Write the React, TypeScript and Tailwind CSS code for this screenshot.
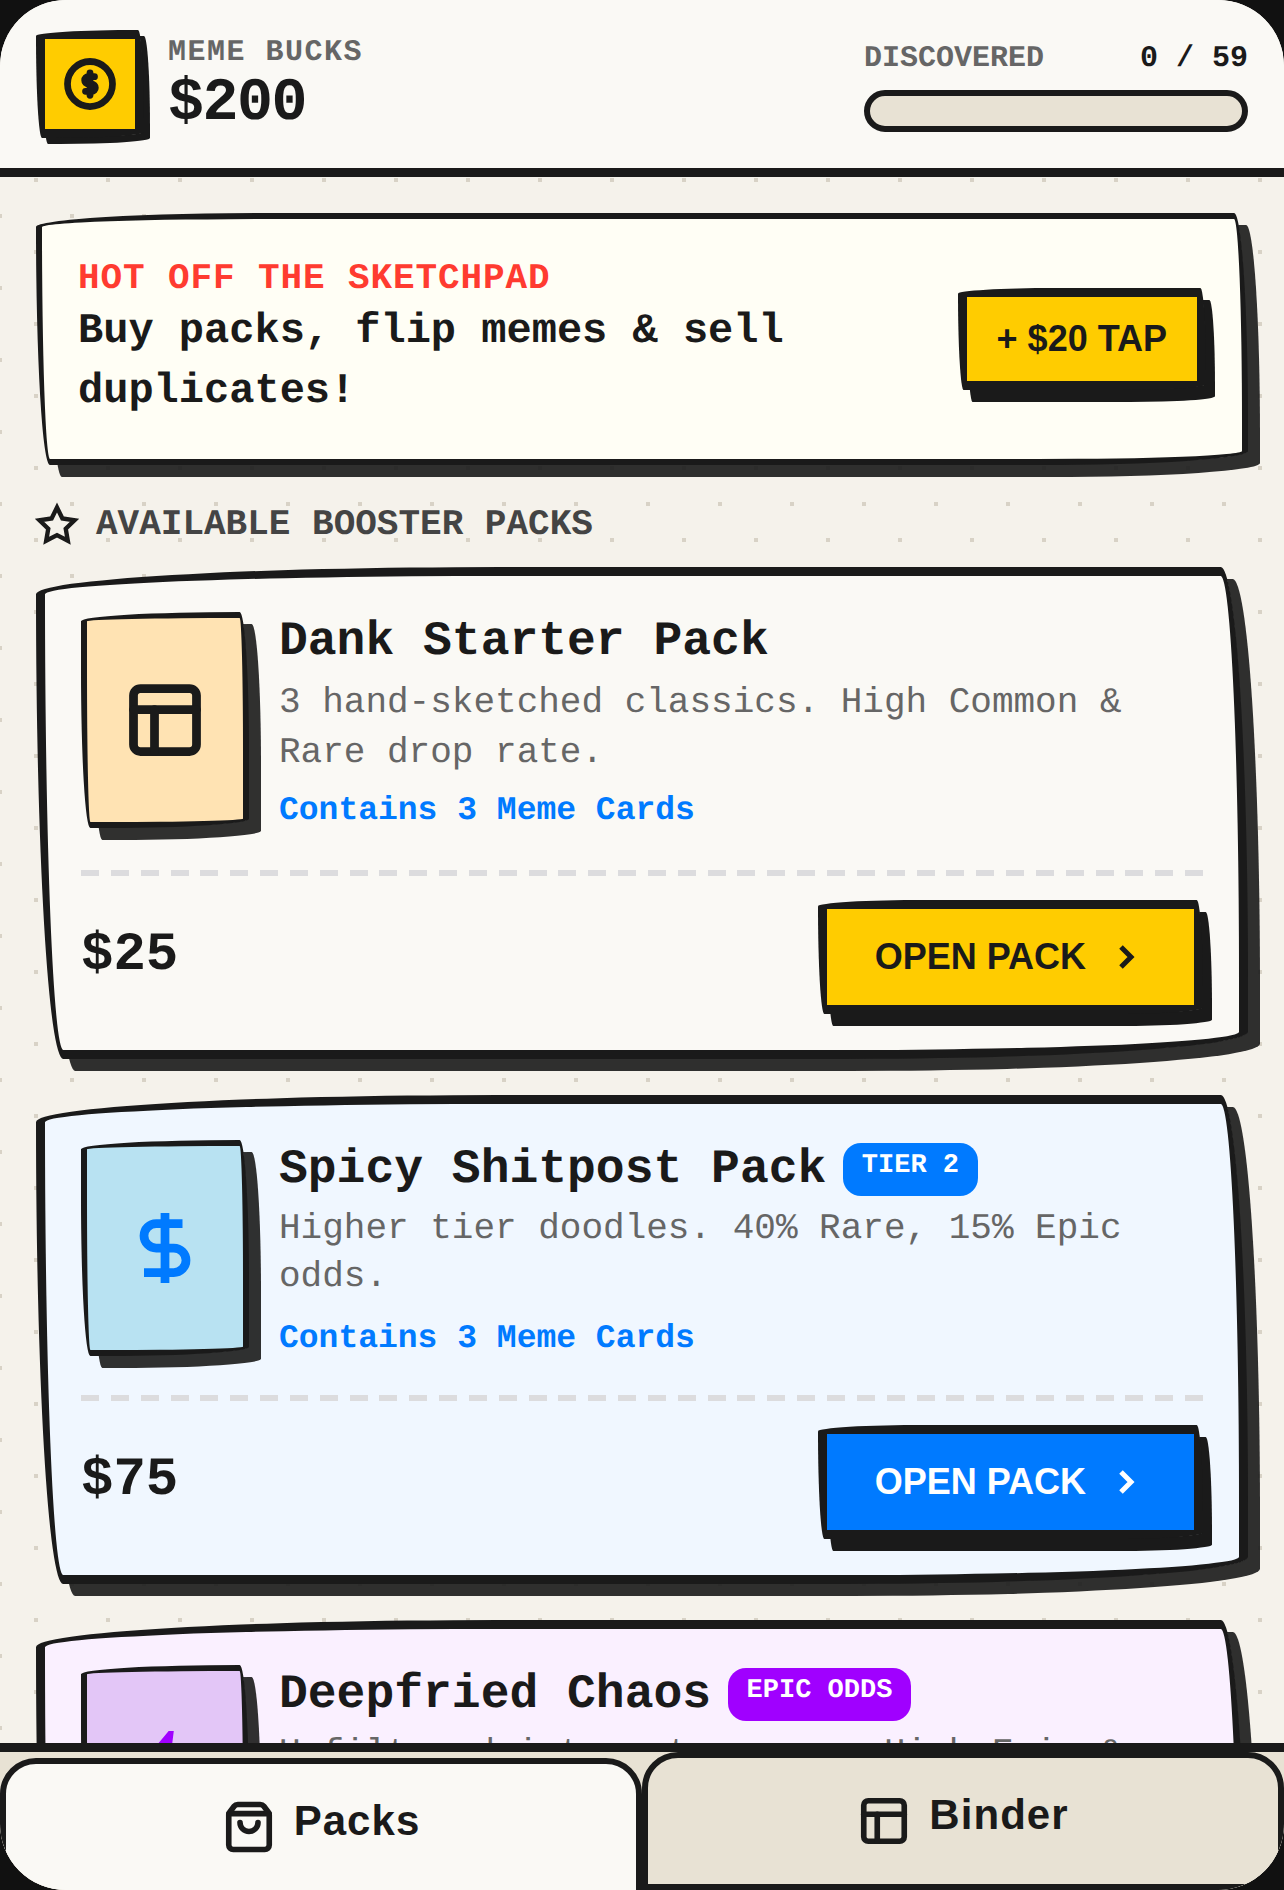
import { ChevronRight, DollarSign, PanelsTopLeft, ShoppingBag } from 'lucide-react';
import type { ReactNode } from 'react';

interface Pack {
  name: string;
  badge?: string;
  badgeClass?: string;
  desc: string;
  descClass: string;
  containsClass: string;
  price: string;
  cardClass: string;
  artClass: string;
  rowClass: string;
  buttonClass: string;
  icon: ReactNode;
}

// sharp-cornered bolt, the icon package's one has rounded ends
const BoltIcon = () => (
  <svg width="84" height="84" viewBox="0 0 24 24" fill="#a000ff" stroke="#a000ff" strokeWidth="2.5" strokeLinejoin="miter">
    <polygon points="13 2 3 14 12 14 11 22 21 10 12 10 13 2" />
  </svg>
);

const StarIcon = () => (
  <svg width="42" height="42" viewBox="0 0 24 24" fill="none" stroke="#1a1a1a" strokeWidth="2.5" strokeLinejoin="miter" className="shrink-0 overflow-visible">
    <polygon points="12 2 15.09 8.26 22 9.27 17 14.14 18.18 21.02 12 17.77 5.82 21.02 7 14.14 2 9.27 8.91 8.26 12 2" />
  </svg>
);

const CoinIcon = () => (
  <svg width="54" height="54" viewBox="0 0 24 24" fill="none" stroke="#1a1a1a" strokeWidth="3" strokeLinecap="round">
    <circle cx="12" cy="12" r="10" />
    <path d="M14 8.75h-2.75a1.6 1.6 0 0 0 0 3.25h1.5a1.6 1.6 0 0 1 0 3.25H10" />
    <path d="M12 7v10" />
  </svg>
);

const packs: Pack[] = [
  {
    name: 'Dank Starter Pack',
    desc: '3 hand-sketched classics. High Common & Rare drop rate.',
    descClass: 'mt-[5px] leading-[49.5px]',
    containsClass: 'mt-[10px]',
    price: '$25',
    cardClass: 'bg-[#faf9f5]',
    artClass: 'bg-[#ffe3b3]',
    rowClass: 'pb-[35px]',
    buttonClass: 'bg-[#ffcc00] text-[#1a1a1a]',
    icon: <PanelsTopLeft size={84} strokeWidth={2.5} className="text-[#1a1a1a]" />,
  },
  {
    name: 'Spicy Shitpost Pack',
    badge: 'TIER 2',
    badgeClass: 'bg-[#007aff]',
    desc: 'Higher tier doodles. 40% Rare, 15% Epic odds.',
    descClass: 'mt-[4px] leading-[48px]',
    containsClass: 'mt-[14px]',
    price: '$75',
    cardClass: 'bg-[#f0f7ff]',
    artClass: 'bg-[#b8e2f2]',
    rowClass: 'pb-[32px]',
    buttonClass: 'bg-[#007aff] text-white',
    icon: <DollarSign size={84} strokeWidth={2.5} strokeLinecap="butt" strokeLinejoin="miter" className="text-[#007aff]" />,
  },
  {
    name: 'Deepfried Chaos',
    badge: 'EPIC ODDS',
    badgeClass: 'bg-[#a000ff]',
    desc: 'Unfiltered internet sewage. High Epic & Legendary odds.',
    descClass: 'mt-[4px] leading-[48px]',
    containsClass: 'mt-[14px]',
    price: '$150',
    cardClass: 'bg-[#faf0ff]',
    artClass: 'bg-[#e3c6f7]',
    rowClass: 'pb-[32px]',
    buttonClass: 'bg-[#a000ff] text-white',
    icon: <BoltIcon />,
  },
];

const PackCard = ({ pack }: { pack: Pack }) => (
  <div
    className={`shrink-0 border-[9px] border-[#1a1a1a] rounded-[918px_54px_810px_54px/54px_810px_54px_918px] shadow-[12px_12px_0_rgba(26,26,26,0.9)] p-[36px] ${pack.cardClass}`}
  >
    <div className={`flex items-start gap-[30px] ${pack.rowClass}`}>
      <div
        className={`shrink-0 w-[168px] h-[216px] flex items-center justify-center border-[6px] border-[#1a1a1a] rounded-[918px_54px_810px_54px/54px_810px_54px_918px] shadow-[12px_12px_0_rgba(26,26,26,0.9)] ${pack.artClass}`}
      >
        {pack.icon}
      </div>
      <div className="flex-1 min-w-0">
        <div className="flex items-start gap-[17px]">
          <h3 className="text-[48px] leading-[61px] font-bold text-[#1a1a1a] whitespace-nowrap">{pack.name}</h3>
          {pack.badge && (
            <span
              className={`mt-[3px] h-[53px] px-[18.5px] pt-[5px] rounded-[18px] text-[27px] leading-[36px] font-bold text-white whitespace-nowrap ${pack.badgeClass}`}
            >
              {pack.badge}
            </span>
          )}
        </div>
        <p className={`text-[36px] text-[#666666] ${pack.descClass}`}>{pack.desc}</p>
        <p className={`text-[33px] leading-[48px] font-bold text-[#007aff] ${pack.containsClass}`}>Contains 3 Meme Cards</p>
      </div>
    </div>
    <div className="h-[6px] bg-[repeating-linear-gradient(90deg,#dcdcde_0,#dcdcde_18px,transparent_18px,transparent_29.84px)]" />
    <div className="mt-[24px] flex items-center justify-between">
      <span className="mb-[3px] text-[54px] leading-[84px] font-bold text-[#1a1a1a]">{pack.price}</span>
      <button
        className={`h-[114px] px-[48px] flex items-center gap-[20px] border-[9px] border-[#1a1a1a] rounded-[918px_54px_810px_54px/54px_810px_54px_918px] shadow-[9px_12px_0_#1a1a1a] font-['Liberation_Sans',sans-serif] font-bold text-[36px] ${pack.buttonClass}`}
      >
        OPEN PACK
        <ChevronRight size={40} strokeWidth={3} strokeLinecap="butt" strokeLinejoin="miter" />
      </button>
    </div>
  </div>
);

export default function App() {
  return (
    <div className="w-[1284px] h-[1890px] bg-[#111111] overflow-hidden font-['Liberation_Mono',monospace] [text-rendering:geometricPrecision]">
      <div className="h-full rounded-[66px] bg-[#222222] overflow-hidden">
        <div className="h-full flex flex-col rounded-[63px] overflow-hidden bg-[#f5f2eb]">
          {/* Header */}
          <header className="shrink-0 h-[177px] border-b-[9px] border-[#1a1a1a] bg-[#faf9f5] px-[36px] flex items-center justify-between">
            <div className="flex items-center gap-[24px]">
              <div className="w-[108px] h-[108px] flex items-center justify-center bg-[#ffcc00] border-[9px] border-[#1a1a1a] rounded-[918px_54px_810px_54px/54px_810px_54px_918px] shadow-[6px_6px_0_#1a1a1a]">
                <CoinIcon />
              </div>
              <div className="pb-[2px]">
                <div className="text-[30px] leading-[42px] font-bold tracking-[1.5px] text-[#666666]">MEME BUCKS</div>
                <div className="text-[60px] leading-[61px] font-bold tracking-[-1.5px] text-[#1a1a1a]">$200</div>
              </div>
            </div>
            <div className="w-[384px]">
              <div className="flex items-center justify-between text-[30px] leading-[47px] font-bold">
                <span className="text-[#666666]">DISCOVERED</span>
                <span className="text-[#1a1a1a]">0 / 59</span>
              </div>
              <div className="mt-[7px] h-[42px] rounded-full border-[6px] border-[#1a1a1a] bg-[#e8e2d4]" />
            </div>
          </header>

          <main className="flex-1 min-h-0 overflow-hidden p-[36px] flex flex-col bg-[image:conic-gradient(at_4px_4px,transparent_75%,#d8d2c6_0),conic-gradient(at_4px_4px,transparent_75%,#d8d2c6_0)] bg-[size:72px_72px] bg-[position:34px_1px,70px_37px]">
            <div className="shrink-0 h-[252px] flex items-center gap-[30px] bg-[#fffef5] border-[6px] border-[#1a1a1a] rounded-[918px_54px_810px_54px/54px_810px_54px_918px] shadow-[12px_12px_0_rgba(26,26,26,0.9)] px-[36px]">
              <div className="flex-1 min-w-0">
                <div className="text-[36px] leading-[48px] font-bold tracking-[0.9px] text-[#ff3b30]">HOT OFF THE SKETCHPAD</div>
                <p className="-mt-[2px] mb-[2px] text-[42px] leading-[60px] font-bold text-[#1a1a1a]">Buy packs, flip memes &amp; sell duplicates!</p>
              </div>
              <button className="shrink-0 h-[102px] px-[30px] border-[9px] border-[#1a1a1a] rounded-[918px_54px_810px_54px/54px_810px_54px_918px] bg-[#ffcc00] shadow-[9px_12px_0_#1a1a1a] font-['Liberation_Sans',sans-serif] font-bold text-[36px] text-[#1a1a1a] whitespace-nowrap">
                + $20 TAP
              </button>
            </div>

            <div className="shrink-0 mt-[36px] mb-[18px] h-[48px] flex items-center gap-[18px]">
              <StarIcon />
              <h2 className="text-[36px] leading-[48px] font-bold text-[#444444]">AVAILABLE BOOSTER PACKS</h2>
            </div>

            <div className="flex flex-col gap-[36px]">
              {packs.map((pack) => (
                <PackCard key={pack.name} pack={pack} />
              ))}
            </div>
          </main>

          {/* Bottom tabs */}
          <nav className="shrink-0 h-[147px] overflow-hidden border-t-[9px] border-[#1a1a1a] bg-[#e8e2d4] grid grid-cols-2 items-start">
            <button className="mt-[6px] h-[138px] flex items-center justify-center gap-[18px] border-[6px] border-[#1a1a1a] rounded-t-[36px] bg-[#faf9f5] text-[#1a1a1a] font-['Liberation_Sans',sans-serif]">
              <ShoppingBag size={54} strokeWidth={2.5} />
              <span className="mb-[12px] text-[42px] leading-[60px] font-bold tracking-[1.05px]">Packs</span>
            </button>
            <button className="h-[138px] flex items-center justify-center gap-[18px] border-[6px] border-[#1a1a1a] rounded-t-[36px] bg-[#e8e2d4] text-[#1a1a1a] font-['Liberation_Sans',sans-serif]">
              <PanelsTopLeft size={54} strokeWidth={2.5} />
              <span className="mb-[12px] text-[42px] leading-[60px] font-bold tracking-[1.05px]">Binder</span>
            </button>
          </nav>
        </div>
      </div>
    </div>
  );
}
